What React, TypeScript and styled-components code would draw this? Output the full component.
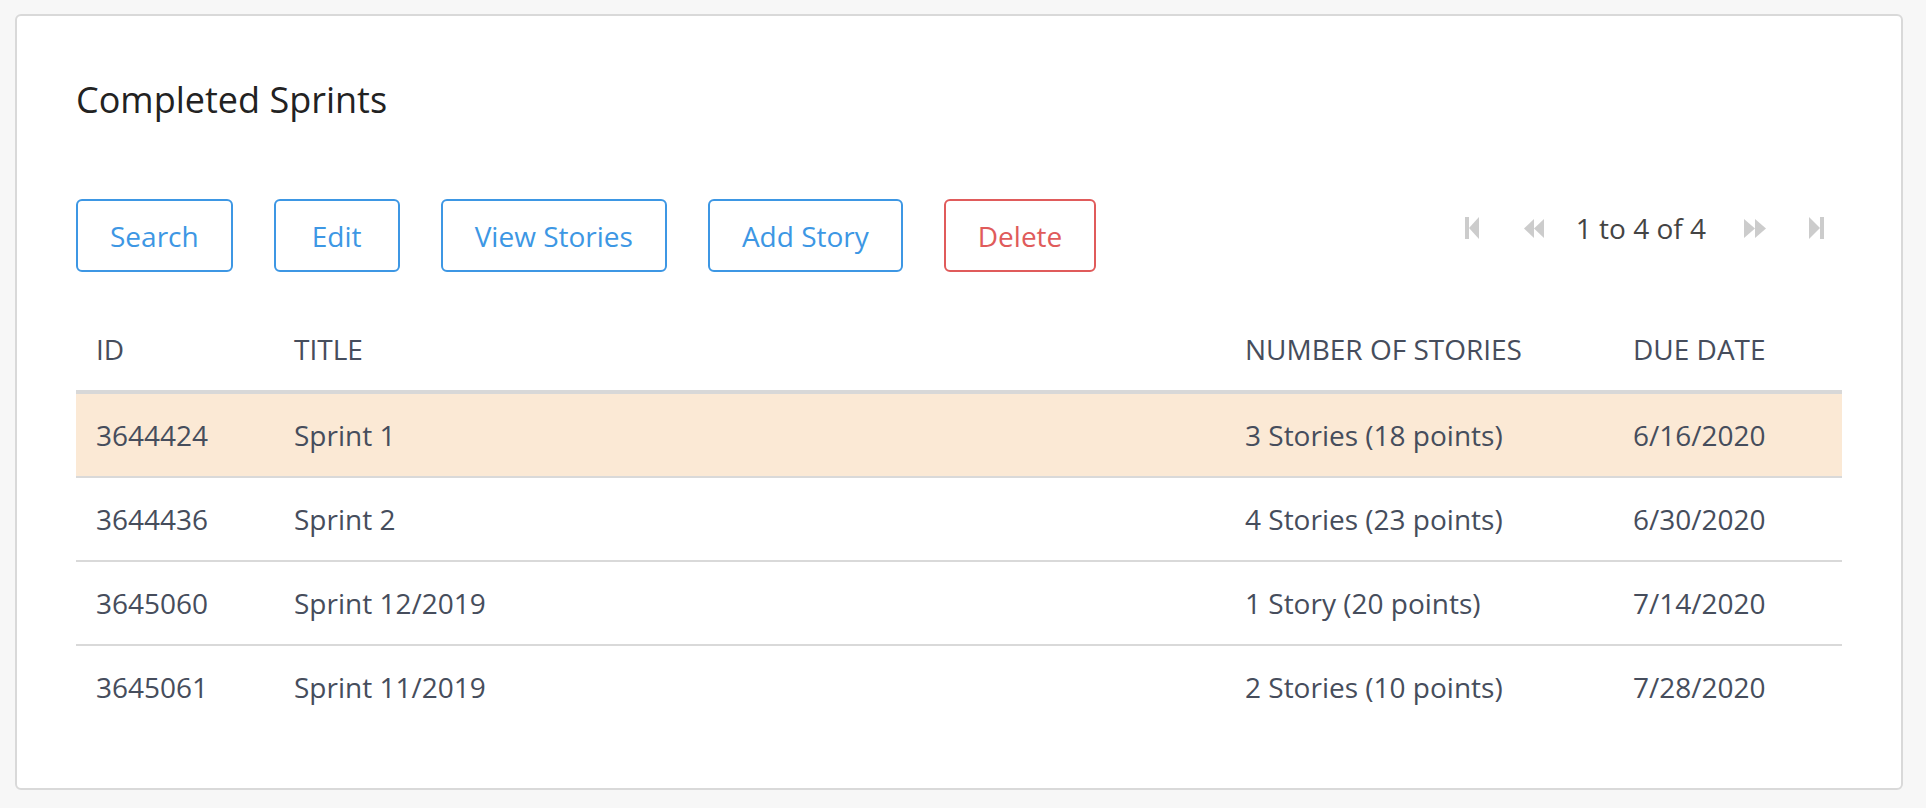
import React from "react";
import styled, { createGlobalStyle } from "styled-components";

const GlobalStyle = createGlobalStyle`
	html, body {
		margin: 0;
		padding: 0;
		background-color: #f7f7f7;
		font-family: "Open Sans", "Noto Sans", sans-serif;
	}
`;

const SPage = styled.div`
	padding: 14px 23px 19px 15px;
`;

const SCard = styled.section`
	background-color: #fff;
	border: 2px solid #d9d9d9;
	border-radius: 6px;
	padding: 59px 59px 60px;
`;

const STitle = styled.h2`
	margin: 0;
	font-size: 36px;
	line-height: 49px;
	font-weight: 400;
	color: #222;
`;

const SToolbar = styled.div`
	display: flex;
	align-items: flex-start;
	justify-content: space-between;
	margin-top: 75px;
`;

const SActions = styled.div`
	display: flex;
	gap: 41px;
`;

const SButton = styled.button<{ $danger?: boolean }>`
	height: 73px;
	min-width: 126px;
	padding: 0 32px;
	background: #fff;
	border: 2px solid ${(p) => (p.$danger ? "#e05b5b" : "#3d97e4")};
	color: ${(p) => (p.$danger ? "#e05b5b" : "#3d97e4")};
	border-radius: 6px;
	font-family: inherit;
	font-size: 28px;
	cursor: pointer;
`;

const SPager = styled.div`
	display: flex;
	align-items: center;
	height: 58px;
	padding-right: 18px;
	color: #444;
	font-size: 28px;
`;

const SPagerIcon = styled.svg<{ $gap: number }>`
	display: block;
	margin-left: ${(p) => p.$gap}px;
	fill: #cccccc;
	cursor: pointer;
`;

const SPagerText = styled.span<{ $gap: number }>`
	margin-left: ${(p) => p.$gap}px;
`;

const STable = styled.table`
	width: 100%;
	margin-top: 36px;
	border-collapse: collapse;
	font-size: 28px;
	color: #464d5c;
	th {
		height: 82px;
		padding: 0 20px;
		text-align: left;
		font-weight: 400;
		text-transform: uppercase;
		border-bottom: 4px solid #d8d8d8;
	}
	td {
		height: 82px;
		padding: 0 20px;
		border-bottom: 2px solid #d9d9d9;
	}
	tbody tr:last-child td {
		border-bottom: none;
	}
`;

const SRow = styled.tr<{ $selected?: boolean }>`
	background-color: ${(p) => (p.$selected ? "#fbe9d5" : "transparent")};
`;

const SCol = styled.col<{ $w: number }>`
	width: ${(p) => p.$w}px;
`;

const sprints = [
	{ id: "3644424", title: "Sprint 1", stories: "3 Stories (18 points)", due: "6/16/2020" },
	{ id: "3644436", title: "Sprint 2", stories: "4 Stories (23 points)", due: "6/30/2020" },
	{ id: "3645060", title: "Sprint 12/2019", stories: "1 Story (20 points)", due: "7/14/2020" },
	{ id: "3645061", title: "Sprint 11/2019", stories: "2 Stories (10 points)", due: "7/28/2020" },
];

function App() {
	return (
		<>
			<GlobalStyle />
			<SPage>
				<SCard>
					<STitle>Completed Sprints</STitle>
					<SToolbar>
						<SActions>
							<SButton>Search</SButton>
							<SButton>Edit</SButton>
							<SButton>View Stories</SButton>
							<SButton>Add Story</SButton>
							<SButton $danger>Delete</SButton>
						</SActions>
						<SPager>
							<SPagerIcon $gap={0} width="14" height="22" viewBox="0 0 14 22">
								<rect x="0" y="0" width="4" height="22" />
								<polygon points="14,0 4,11 14,22" />
							</SPagerIcon>
							<SPagerIcon $gap={45} width="20" height="19" viewBox="0 0 20 19">
								<polygon points="10,0 0,9.5 10,19" />
								<polygon points="20,0 10,9.5 20,19" />
							</SPagerIcon>
							<SPagerText $gap={32}>1 to 4 of 4</SPagerText>
							<SPagerIcon $gap={38} width="22" height="19" viewBox="0 0 22 19">
								<polygon points="0,0 11,9.5 0,19" />
								<polygon points="11,0 22,9.5 11,19" />
							</SPagerIcon>
							<SPagerIcon $gap={43} width="15" height="22" viewBox="0 0 15 22">
								<polygon points="0,0 11,11 0,22" />
								<rect x="11" y="0" width="4" height="22" />
							</SPagerIcon>
						</SPager>
					</SToolbar>
					<STable>
						<colgroup>
							<SCol $w={198} />
							<SCol $w={951} />
							<SCol $w={388} />
							<SCol $w={229} />
						</colgroup>
						<thead>
							<tr>
								<th>ID</th>
								<th>Title</th>
								<th>Number of Stories</th>
								<th>Due Date</th>
							</tr>
						</thead>
						<tbody>
							{sprints.map((s, i) => (
								<SRow key={s.id} $selected={i === 0}>
									<td>{s.id}</td>
									<td>{s.title}</td>
									<td>{s.stories}</td>
									<td>{s.due}</td>
								</SRow>
							))}
						</tbody>
					</STable>
				</SCard>
			</SPage>
		</>
	);
}

export default App;
